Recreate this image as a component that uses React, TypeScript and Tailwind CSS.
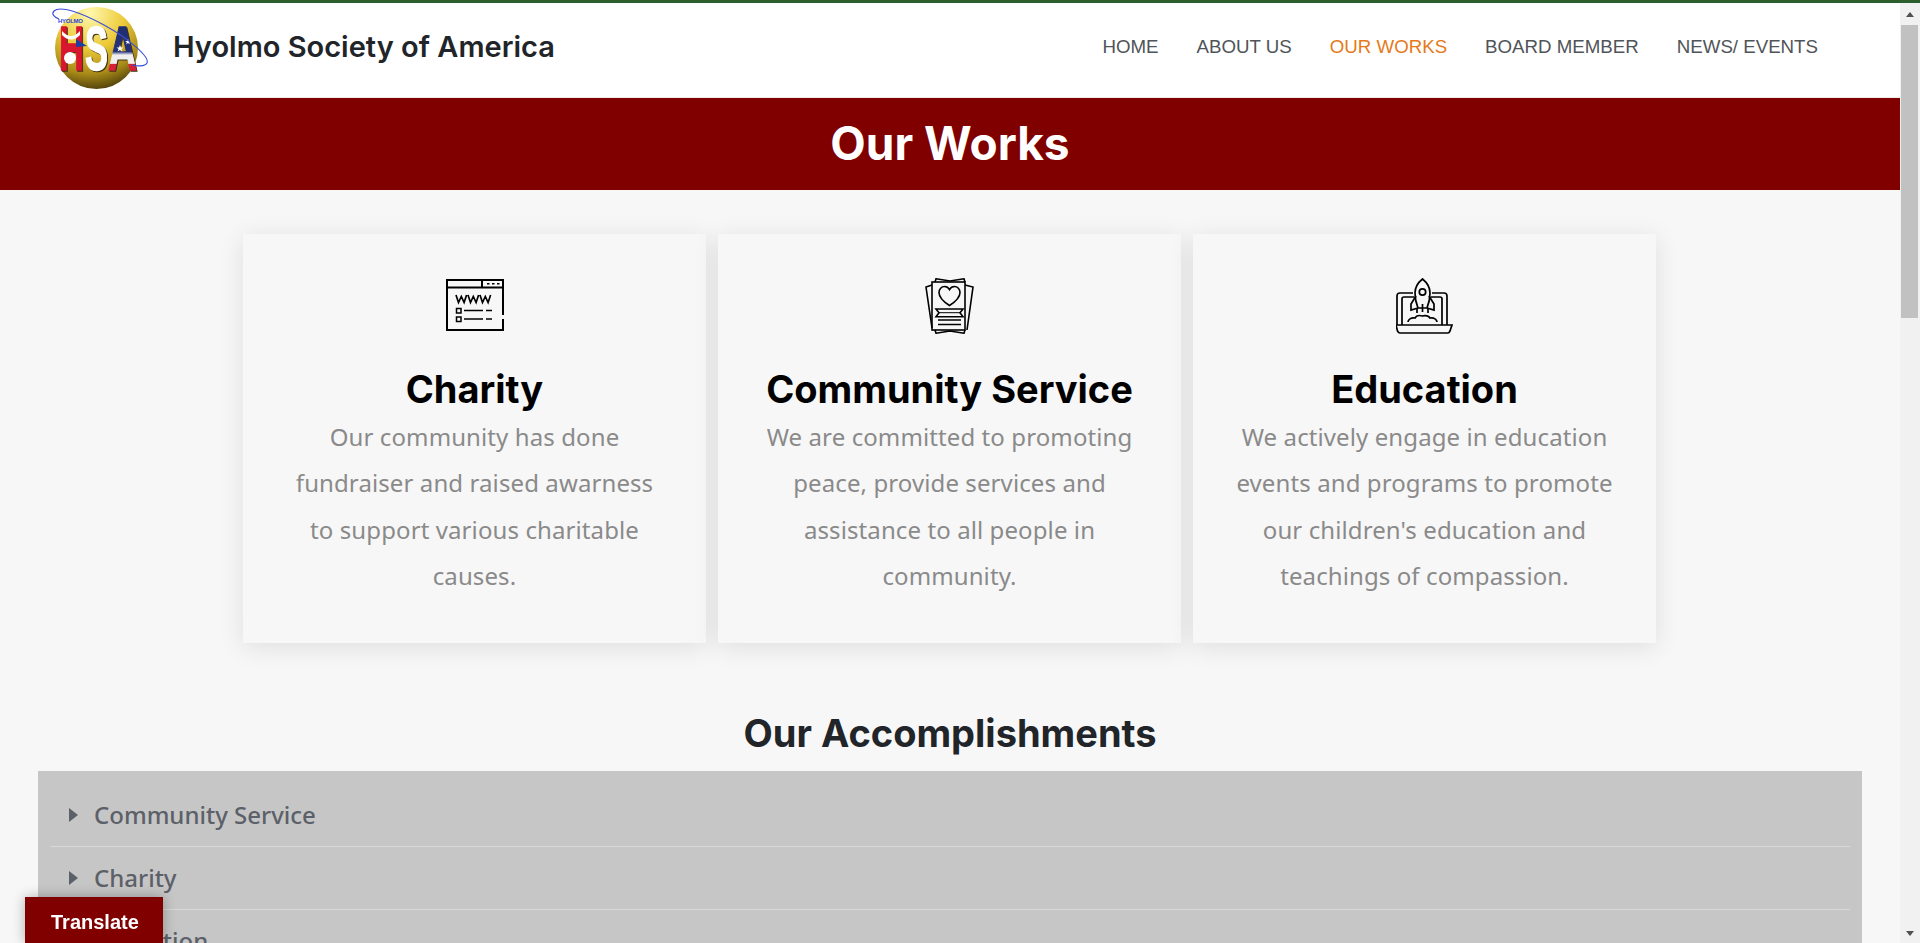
import React from "react";

const sans = "font-['Inter','Liberation_Sans',sans-serif]";
const body = "font-['Noto_Sans','Liberation_Sans',sans-serif]";

function Logo() {
  return (
    <svg width="96" height="86" viewBox="0 0 96 86" className="shrink-0 mb-[4px] overflow-visible">
      <defs>
        <radialGradient id="g" cx="0.42" cy="0.08" r="1.05">
          <stop offset="0" stopColor="#fff8b0" />
          <stop offset="0.4" stopColor="#ecca38" />
          <stop offset="0.7" stopColor="#a88a18" />
          <stop offset="1" stopColor="#1c1604" />
        </radialGradient>
        <linearGradient id="a" x1="0" y1="0" x2="0" y2="1">
          <stop offset="0" stopColor="#1d2a6b" />
          <stop offset="0.55" stopColor="#27327c" />
          <stop offset="0.6" stopColor="#f0f0f0" />
          <stop offset="0.72" stopColor="#f0f0f0" />
          <stop offset="0.73" stopColor="#d8203a" />
          <stop offset="0.84" stopColor="#d8203a" />
          <stop offset="0.85" stopColor="#f0f0f0" />
          <stop offset="0.92" stopColor="#f0f0f0" />
          <stop offset="0.93" stopColor="#d8203a" />
          <stop offset="1" stopColor="#d8203a" />
        </linearGradient>
      </defs>
      <ellipse cx="44.500" cy="43" rx="41.500" ry="41" fill="url(#g)" />
      <g fontFamily="Liberation Sans" fontWeight="700" fontSize="63" className="drop-shadow-[1.500px_1.500px_0_#3f3210]">
        <text x="7" y="65" fill="#d9162f" stroke="#d9162f" strokeWidth="1.500" textLength="25" lengthAdjust="spacingAndGlyphs">H</text>
        <text x="33" y="65" fill="#ffffff" stroke="#ffffff" strokeWidth="1.500" textLength="23" lengthAdjust="spacingAndGlyphs">S</text>
        <text x="56" y="65" fill="url(#a)" stroke="url(#a)" strokeWidth="1.500" textLength="29" lengthAdjust="spacingAndGlyphs">A</text>
      </g>
      <path d="M10 26q9 10 18 0v4q-9 9-18 0z" fill="#fff" />
      <path d="M24 34l11 7-11 1z" fill="#1d3fa0" />
      <circle cx="18" cy="53" r="6" fill="#fff" />
      <path d="M68 40l1 2.500h2.500l-2 1.500.8 2.500-2.300-1.500-2.300 1.500.8-2.500-2-1.500h2.500z M76 34l.8 2h2l-1.600 1.200.6 2-1.800-1.200-1.800 1.200.6-2-1.600-1.200h2z" fill="#fff" />
      <path d="M7 14C2 12-1 9 2 6 8 0 30 8 52 20c24 13 46 32 43 38-2 4-11 3-15 2" fill="none" stroke="#3a4fd8" strokeWidth="1.100" />
      <text x="6" y="18" fontFamily="Liberation Sans" fontWeight="700" fontSize="6" fill="#2d46d8" textLength="25">HYOLMO</text>
    </svg>
  );
}

function WwwIcon() {
  return (
    <svg width="58" height="52" viewBox="0 0 58 52" fill="none" stroke="#000" strokeWidth="2" className="block mb-[3px]">
      <path d="M57 36V1H1v50h56V40" />
      <path d="M1 8.500h56M36 1v7.500" />
      <path d="M41 4.800h2.500M46 4.800h2.500M51 4.800h2.500" strokeWidth="1.500" />
      <path d="M10 16l2.500 7.500 2.800-6 2.800 6 2.500-7.500M22 16l2.500 7.500 2.800-6 2.800 6 2.500-7.500M34 16l2.500 7.500 2.800-6 2.800 6 2.500-7.500" strokeWidth="1.700" />
      <rect x="10.500" y="29.500" width="4.500" height="4.500" strokeWidth="1.500" />
      <rect x="10.500" y="38" width="4.500" height="4.500" strokeWidth="1.500" />
      <path d="M18 31.500h19M40 31.500h6M18 40h19M40 40h6" strokeWidth="1.500" />
    </svg>
  );
}

function CertIcon() {
  return (
    <svg width="50" height="56" viewBox="0 0 50 56" fill="none" stroke="#000" strokeWidth="1.600" className="block">
      <rect x="7" y="4" width="33" height="48" />
      <path d="M7 7L1 9l6 41M40 7l8 2-6 43" />
      <path d="M10 4l1-3.200 14 2.200 14-2.200 1 3.200M10 52l1 3.200 14-2.200 14 2.200 1-3.200" />
      <path d="M24.500 27.500C19 24 14 20 14 14.500c0-3.500 2.500-6 5.500-6 2.200 0 4 1.200 5 3 1-1.800 2.800-3 5-3 3 0 5.500 2.500 5.500 6 0 5.500-5 9.500-10.500 13z" />
      <path d="M11 31h27l-3 3.700 3 4H11l3-4z" />
      <path d="M14 34.700h21" strokeWidth="1" />
      <path d="M13 42h23M13 46.500h23" />
    </svg>
  );
}

function RocketIcon() {
  return (
    <svg width="57" height="56" viewBox="0 0 57 56" fill="none" stroke="#000" strokeWidth="1.700" className="block">
      <path d="M17 15H4c-2 0-3 1-3 3v29M36 15h12c2 0 3 1 3 3v29" />
      <path d="M18 19H8c-1 0-2 1-2 2v26M35 19h9c1 0 2 1 2 2v26" />
      <path d="M0 47h56l-2 6c-.5 1-1 2-2 2H4c-1 0-2-1-2.500-2z" />
      <path d="M26.500 1c-5 4-7.500 9-7.500 14 0 5 1 10 3 15h9c2-5 3-10 3-15 0-5-2.500-10-7.500-14z" />
      <circle cx="26.500" cy="14" r="3.200" />
      <path d="M20 18l-5 8v6l7-2M33 18l5 8v6l-7-2" />
      <path d="M26.500 26v8M21 31v4M32 31v4" />
      <path d="M12 44c0-2 3-5 7-4 1-2 4-3 7.500-2 3-1 6.500 0 7.500 2 4-1 7 2 7 4" />
    </svg>
  );
}

function Card({ icon, title, lines }: { icon: React.ReactNode; title: string; lines: string[] }) {
  return (
    <div className="w-[463px] h-[409px] bg-[#f7f7f7] shadow-[0_4px_24px_rgba(0,0,0,0.1)] flex flex-col items-center">
      <div className="h-[100px] w-full flex items-end justify-center">{icon}</div>
      <h3 className={`${sans} mt-[35px] text-[38px] leading-[40px] font-bold text-black whitespace-nowrap`}>{title}</h3>
      <div className={`${body} mt-[5px] text-[24px] tracking-[0.1px] leading-[46.400px] text-[#8a8a8a] text-center whitespace-nowrap`}>
        {lines.map((l) => (
          <p key={l}>{l}</p>
        ))}
      </div>
    </div>
  );
}

function Row({ label }: { label: string }) {
  return (
    <div className="flex items-center h-[63px] pl-[19px] gap-[16px] border-b border-[#d9d9d9]">
      <span className="w-0 h-0 border-y-[7px] border-y-transparent border-l-[9px] border-l-[#5c6068]" />
      <span className={`${body} text-[24px] font-medium text-[#5c6068]`}>{label}</span>
    </div>
  );
}

export default function App() {
  return (
    <div className="h-[943px] overflow-hidden flex flex-col bg-[#f7f7f7]">
      <div className="h-[3px] bg-[#2c5e2e] shrink-0" />
      <div className="flex flex-1 min-h-0">
        <div className="flex-1 min-w-0 flex flex-col overflow-hidden">
          <header className="h-[95px] shrink-0 bg-white flex items-center justify-between pl-[52px] pr-[82px] border-b border-[#eeeeee]">
            <div className="flex items-center gap-[25px]">
              <Logo />
              <span className={`${sans} text-[29px] font-semibold text-[#212529] mb-[7px]`}>Hyolmo Society of America</span>
            </div>
            <nav className="flex gap-[38px] text-[18.700px] text-[#4f5459] font-['Liberation_Sans',sans-serif] mb-[6px]">
              <a>HOME</a>
              <a>ABOUT US</a>
              <a className="text-[#e67a1a]">OUR WORKS</a>
              <a>BOARD MEMBER</a>
              <a>NEWS/ EVENTS</a>
            </nav>
          </header>
          <div className="h-[92px] shrink-0 bg-[#800000] flex items-center justify-center">
            <h1 className={`${sans} text-[46px] font-bold text-white mb-[2px]`}>Our Works</h1>
          </div>
          <section className="flex justify-center gap-[12px] mt-[44px] pr-[1px] shrink-0">
            <Card icon={<WwwIcon />} title="Charity" lines={["Our community has done", "fundraiser and raised awarness", "to support various charitable", "causes."]} />
            <Card icon={<CertIcon />} title="Community Service" lines={["We are committed to promoting", "peace, provide services and", "assistance to all people in", "community."]} />
            <Card icon={<RocketIcon />} title="Education" lines={["We actively engage in education", "events and programs to promote", "our children's education and", "teachings of compassion."]} />
          </section>
          <h2 className={`${sans} text-center text-[38px] leading-[44px] font-bold text-[#212529] mt-[68px] shrink-0`}>Our Accomplishments</h2>
          <div className="mx-[38px] mt-[16px] bg-[#c6c6c6] px-[12px] pt-[13px] shrink-0">
            <Row label="Community Service" />
            <Row label="Charity" />
            <Row label="Education" />
          </div>
        </div>
        <div className="w-[20px] shrink-0 bg-[#f1f1f1] flex flex-col justify-between">
          <div className="flex flex-col">
            <div className="h-[22px] flex items-center justify-center">
              <span className="w-0 h-0 border-x-[4.500px] border-x-transparent border-b-[5px] border-b-[#505050]" />
            </div>
            <div className="ml-[1px] w-[17px] h-[293px] bg-[#c1c1c1]" />
          </div>
          <div className="h-[20px] flex items-center justify-center">
            <span className="w-0 h-0 border-x-[4.500px] border-x-transparent border-t-[5px] border-t-[#505050]" />
          </div>
        </div>
      </div>
      <div className="fixed left-[25px] top-[897px] w-[138px] h-[46px] bg-[#800000] shadow-[0_0_12px_rgba(0,0,0,0.3)] pl-[26px] pt-[13px] text-white text-[20px] leading-[24px] font-bold font-['Liberation_Sans',sans-serif]">
        Translate
      </div>
    </div>
  );
}
